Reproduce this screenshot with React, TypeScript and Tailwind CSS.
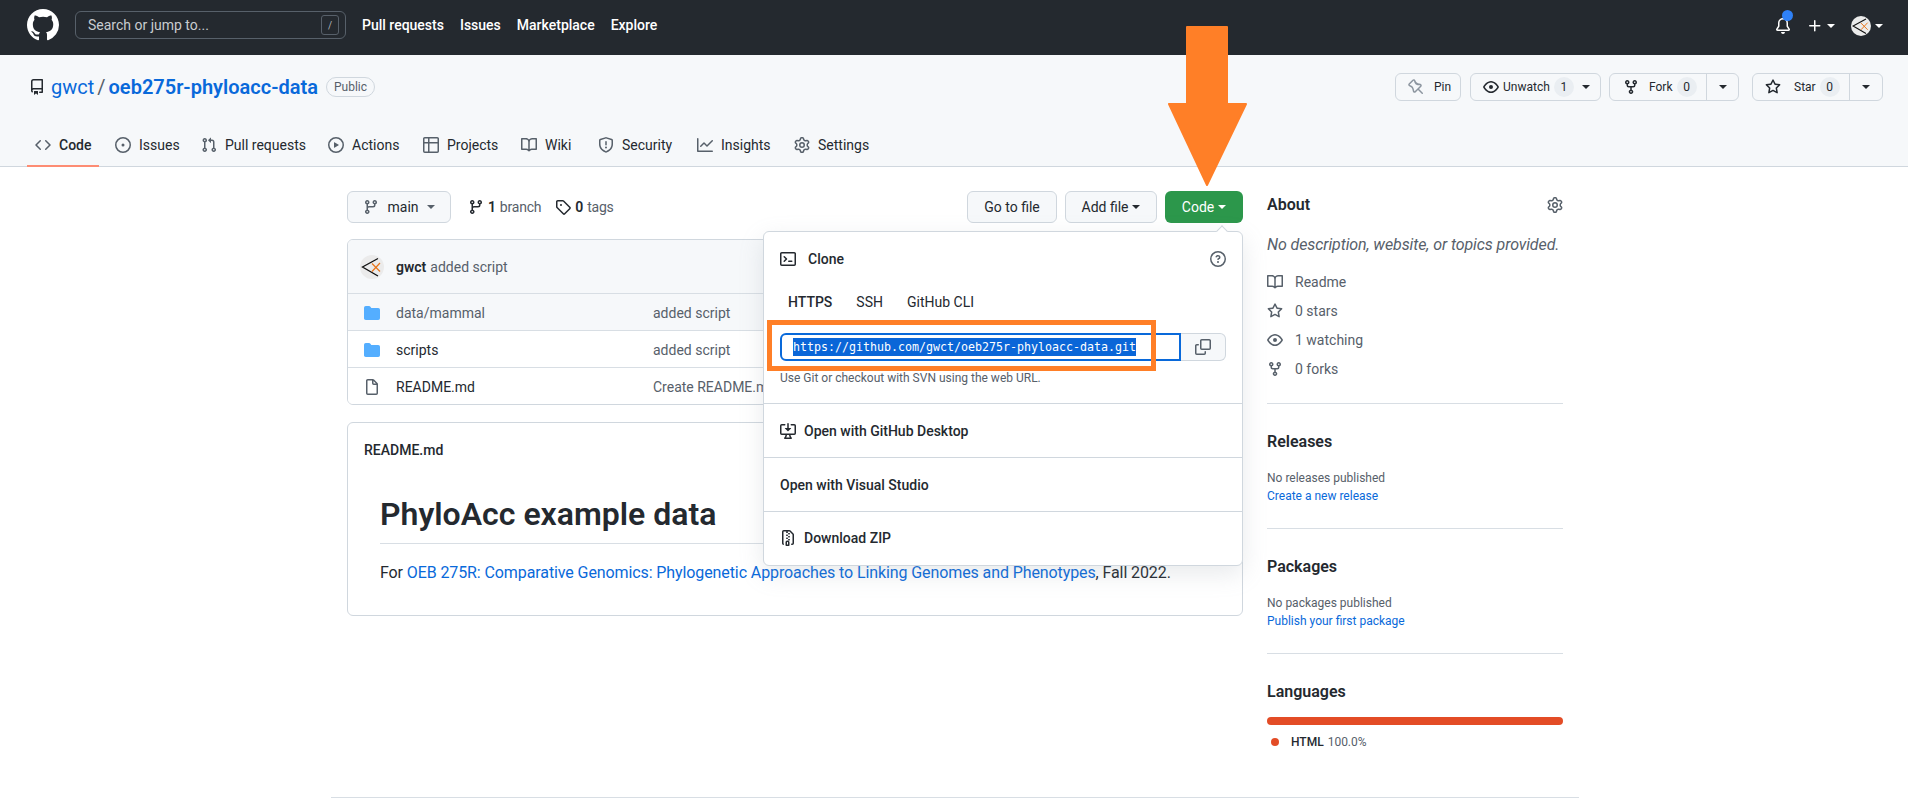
import React from 'react';

const icons: Record<string, string> = {
  github: 'M8 0C3.58 0 0 3.58 0 8c0 3.54 2.29 6.53 5.47 7.59.4.07.55-.17.55-.38 0-.19-.01-.82-.01-1.49-2.01.37-2.53-.49-2.69-.94-.09-.23-.48-.94-.82-1.13-.28-.15-.68-.52-.01-.53.63-.01 1.08.58 1.23.82.72 1.21 1.87.87 2.33.66.07-.52.28-.87.51-1.07-1.78-.2-3.64-.89-3.64-3.95 0-.87.31-1.59.82-2.15-.08-.2-.36-1.02.08-2.12 0 0 .67-.21 2.2.82.64-.18 1.32-.27 2-.27.68 0 1.36.09 2 .27 1.53-1.04 2.2-.82 2.2-.82.44 1.1.16 1.92.08 2.12.51.56.82 1.27.82 2.15 0 3.07-1.87 3.75-3.65 3.95.29.25.54.73.54 1.48 0 1.07-.01 1.93-.01 2.2 0 .21.15.46.55.38A8.013 8.013 0 0016 8c0-4.42-3.58-8-8-8z',
  repo: 'M2 2.5A2.5 2.5 0 014.5 0h8.75a.75.75 0 01.75.75v12.5a.75.75 0 01-.75.75h-2.5a.75.75 0 110-1.5h1.75v-2h-8a1 1 0 00-.714 1.7.75.75 0 01-1.072 1.05A2.495 2.495 0 012 11.5v-9zm10.5-1V9h-8c-.356 0-.694.074-1 .208V2.5a1 1 0 011-1h8zM5 12.25v3.25a.25.25 0 00.4.2l1.45-1.087a.25.25 0 01.3 0L8.6 15.7a.25.25 0 00.4-.2v-3.25a.25.25 0 00-.25-.25h-3.5a.25.25 0 00-.25.25z',
  code: 'M4.72 3.22a.75.75 0 011.06 1.06L2.06 8l3.72 3.72a.75.75 0 11-1.06 1.06L.47 8.53a.75.75 0 010-1.06l4.25-4.25zm6.56 0a.75.75 0 10-1.06 1.06L13.94 8l-3.72 3.72a.75.75 0 101.06 1.06l4.25-4.25a.75.75 0 000-1.06l-4.25-4.25z',
  issue: 'M8 9.5a1.5 1.5 0 100-3 1.5 1.5 0 000 3zM8 0a8 8 0 100 16A8 8 0 008 0zM1.5 8a6.5 6.5 0 1113 0 6.5 6.5 0 01-13 0z',
  pull: 'M7.177 3.073L9.573.677A.25.25 0 0110 .854v4.792a.25.25 0 01-.427.177L7.177 3.427a.25.25 0 010-.354zM3.75 2.5a.75.75 0 100 1.5.75.75 0 000-1.5zm-2.25.75a2.25 2.25 0 113 2.122v5.256a2.251 2.251 0 11-1.5 0V5.372A2.25 2.25 0 011.5 3.25zM11 2.5h-1V4h1a1 1 0 011 1v5.628a2.251 2.251 0 101.5 0V5A2.5 2.5 0 0011 2.5zm1 10.25a.75.75 0 111.5 0 .75.75 0 01-1.5 0zM3.75 12a.75.75 0 100 1.5.75.75 0 000-1.5z',
  play: 'M1.5 8a6.5 6.5 0 1113 0 6.5 6.5 0 01-13 0zM8 0a8 8 0 100 16A8 8 0 008 0zM6.379 5.227A.25.25 0 006 5.442v5.117a.25.25 0 00.379.214l4.264-2.559a.25.25 0 000-.428L6.379 5.227z',
  table: 'M0 1.75C0 .784.784 0 1.75 0h12.5C15.216 0 16 .784 16 1.75v12.5A1.75 1.75 0 0114.25 16H1.75A1.75 1.75 0 010 14.25V1.75zM1.5 6.5v7.75c0 .138.112.25.25.25H5v-8H1.5zM5 5H1.5V1.75a.25.25 0 01.25-.25H5V5zm1.5 1.5v8h7.75a.25.25 0 00.25-.25V6.5h-8zm8-1.5h-8V1.5h7.75a.25.25 0 01.25.25V5z',
  book: 'M0 1.75A.75.75 0 01.75 1h4.253c1.227 0 2.317.59 3 1.501A3.744 3.744 0 0111.006 1h4.245a.75.75 0 01.75.75v10.5a.75.75 0 01-.75.75h-4.507a2.25 2.25 0 00-1.591.659l-.622.621a.75.75 0 01-1.06 0l-.622-.621A2.25 2.25 0 005.258 13H.75a.75.75 0 01-.75-.75V1.75zm8.755 3a2.25 2.25 0 012.25-2.25H14.5v9h-3.757c-.71 0-1.4.201-1.992.572l.004-7.322zm-1.504 7.324l.004-5.073-.002-2.253A2.25 2.25 0 005.003 2.5H1.5v9h3.757a3.75 3.75 0 011.994.574z',
  shield: 'M7.467.133a1.75 1.75 0 011.066 0l5.25 1.68A1.75 1.75 0 0115 3.48V7c0 1.566-.32 3.182-1.303 4.682-.983 1.498-2.585 2.813-5.032 3.855a1.7 1.7 0 01-1.33 0c-2.447-1.042-4.049-2.357-5.032-3.855C1.32 10.182 1 8.566 1 7V3.48a1.75 1.75 0 011.217-1.667l5.25-1.68zm.61 1.429a.25.25 0 00-.153 0l-5.25 1.68a.25.25 0 00-.174.238V7c0 1.358.275 2.666 1.057 3.86.784 1.194 2.121 2.34 4.366 3.297a.2.2 0 00.154 0c2.245-.956 3.582-2.104 4.366-3.298C13.225 9.666 13.5 8.36 13.5 7V3.48a.25.25 0 00-.174-.237l-5.25-1.68zM9 10.5a1 1 0 11-2 0 1 1 0 012 0zm-.25-5.75a.75.75 0 10-1.5 0v3a.75.75 0 001.5 0v-3z',
  graph: 'M1.5 1.75a.75.75 0 00-1.5 0v12.5c0 .414.336.75.75.75h14.5a.75.75 0 000-1.5H1.5V1.75zm14.28 2.53a.75.75 0 00-1.06-1.06L10 7.94 7.53 5.47a.75.75 0 00-1.06 0L3.22 8.72a.75.75 0 001.06 1.06L7 7.06l2.47 2.47a.75.75 0 001.06 0l5.25-5.25z',
  gear: 'M7.429 1.525a6.593 6.593 0 011.142 0c.036.003.108.036.137.146l.289 1.105c.147.56.55.967.997 1.189.174.086.341.183.501.29.417.278.97.423 1.53.27l1.102-.303c.11-.03.175.016.195.046.219.31.41.641.573.989.014.031.022.11-.059.19l-.815.806c-.411.406-.562.957-.53 1.456a4.588 4.588 0 010 .582c-.032.499.119 1.05.53 1.456l.815.806c.08.08.073.159.059.19a6.494 6.494 0 01-.573.99c-.02.029-.086.074-.195.045l-1.103-.303c-.559-.153-1.112-.008-1.529.27-.16.107-.327.204-.5.29-.449.222-.851.628-.998 1.189l-.289 1.105c-.029.11-.101.143-.137.146a6.613 6.613 0 01-1.142 0c-.036-.003-.108-.037-.137-.146l-.289-1.105c-.147-.56-.55-.967-.997-1.189a4.502 4.502 0 01-.501-.29c-.417-.278-.97-.423-1.53-.27l-1.102.303c-.11.03-.175-.016-.195-.046a6.492 6.492 0 01-.573-.989c-.014-.031-.022-.11.059-.19l.815-.806c.411-.406.562-.957.53-1.456a4.587 4.587 0 010-.582c.032-.499-.119-1.05-.53-1.456l-.815-.806c-.08-.08-.073-.159-.059-.19a6.44 6.44 0 01.573-.99c.02-.029.086-.075.195-.045l1.103.303c.559.153 1.112.008 1.529-.27.16-.107.327-.204.5-.29.449-.222.851-.628.998-1.189l.289-1.105c.029-.11.101-.143.137-.146zM8 0c-.236 0-.47.01-.701.03-.743.065-1.29.615-1.458 1.261l-.29 1.106c-.017.066-.078.158-.211.224a5.994 5.994 0 00-.668.386c-.123.082-.233.09-.3.071L3.27 2.776c-.644-.177-1.392.02-1.82.63a7.977 7.977 0 00-.704 1.217c-.315.675-.111 1.422.363 1.891l.815.806c.05.048.098.147.088.294a6.084 6.084 0 000 .772c.01.147-.038.246-.088.294l-.815.806c-.474.469-.678 1.216-.363 1.891.2.428.436.835.704 1.218.428.609 1.176.806 1.82.63l1.103-.303c.066-.019.176-.011.299.071.213.143.436.272.668.386.133.066.194.158.212.224l.289 1.106c.169.646.715 1.196 1.458 1.26a8.094 8.094 0 001.402 0c.743-.064 1.29-.614 1.458-1.26l.29-1.106c.017-.066.078-.158.211-.224a5.98 5.98 0 00.668-.386c.123-.082.233-.09.3-.071l1.102.302c.644.177 1.392-.02 1.82-.63.268-.382.505-.789.704-1.217.315-.675.111-1.422-.364-1.891l-.814-.806c-.05-.048-.098-.147-.088-.294a6.1 6.1 0 000-.772c-.01-.147.039-.246.088-.294l.814-.806c.475-.469.679-1.216.364-1.891a7.992 7.992 0 00-.704-1.218c-.428-.609-1.176-.806-1.82-.63l-1.103.303c-.066.019-.176.011-.299-.071a5.991 5.991 0 00-.668-.386c-.133-.066-.194-.158-.212-.224L10.16 1.29C9.99.645 9.444.095 8.701.031A8.094 8.094 0 008 0zm1.5 8a1.5 1.5 0 11-3 0 1.5 1.5 0 013 0zM11 8a3 3 0 11-6 0 3 3 0 016 0z',
  bell: 'M8 16a2 2 0 001.985-1.75c.017-.137-.097-.25-.235-.25h-3.5c-.138 0-.252.113-.235.25A2 2 0 008 16zM8 1.5A3.5 3.5 0 004.5 5v2.947c0 .346-.102.683-.294.97l-1.703 2.556a.018.018 0 00-.003.01l.001.006c0 .002.002.004.004.006a.017.017 0 00.006.004l.007.001h10.964l.007-.001a.018.018 0 00.006-.004.017.017 0 00.004-.006l.001-.007a.017.017 0 00-.003-.01l-1.703-2.554a1.75 1.75 0 01-.294-.97V5A3.5 3.5 0 008 1.5zM3 5a5 5 0 0110 0v2.947c0 .05.015.098.042.139l1.703 2.555A1.518 1.518 0 0113.482 13H2.518a1.518 1.518 0 01-1.263-2.36l1.703-2.554A.25.25 0 003 7.947V5z',
  plus: 'M7.75 2a.75.75 0 01.75.75V7h4.25a.75.75 0 110 1.5H8.5v4.25a.75.75 0 11-1.5 0V8.5H2.75a.75.75 0 010-1.5H7V2.75A.75.75 0 017.75 2z',
  pin: 'M4.456.734a1.75 1.75 0 012.826.504l.613 1.327a3.081 3.081 0 002.084 1.707l2.454.584c1.332.317 1.8 1.972.832 2.94L11.06 10l3.72 3.72a.75.75 0 11-1.061 1.06L10 11.06l-2.204 2.205c-.968.968-2.623.5-2.94-.832l-.584-2.454a3.081 3.081 0 00-1.707-2.084l-1.327-.613a1.75 1.75 0 01-.504-2.826L4.456.734zM5.92 1.866a.25.25 0 00-.404-.072L1.794 5.516a.25.25 0 00.072.404l1.328.613A4.582 4.582 0 015.73 9.63l.584 2.454a.25.25 0 00.42.12l5.47-5.47a.25.25 0 00-.12-.42L9.63 6.33a4.581 4.581 0 01-3.098-2.537L5.92 1.866z',
  eye: 'M1.679 7.932c.412-.621 1.242-1.75 2.366-2.717C5.175 4.242 6.527 3.5 8 3.5c1.473 0 2.824.742 3.955 1.715 1.124.967 1.954 2.096 2.366 2.717a.119.119 0 010 .136c-.412.621-1.242 1.75-2.366 2.717C10.825 11.758 9.473 12.5 8 12.5c-1.473 0-2.824-.742-3.955-1.715C2.92 9.818 2.09 8.69 1.679 8.068a.119.119 0 010-.136zM8 2c-1.981 0-3.67.992-4.933 2.078C1.797 5.169.88 6.423.43 7.1a1.619 1.619 0 000 1.798c.45.678 1.367 1.932 2.637 3.024C4.329 13.008 6.019 14 8 14c1.981 0 3.67-.992 4.933-2.078 1.27-1.091 2.187-2.345 2.637-3.023a1.619 1.619 0 000-1.798c-.45-.678-1.367-1.932-2.637-3.023C11.671 2.992 9.981 2 8 2zm0 8a2 2 0 100-4 2 2 0 000 4z',
  fork: 'M5 3.25a.75.75 0 11-1.5 0 .75.75 0 011.5 0zm0 2.122a2.25 2.25 0 10-1.5 0v.878A2.25 2.25 0 005.75 8.5h1.5v2.128a2.251 2.251 0 101.5 0V8.5h1.5a2.25 2.25 0 002.25-2.25v-.878a2.25 2.25 0 10-1.5 0v.878a.75.75 0 01-.75.75h-4.5A.75.75 0 015 6.25v-.878zm3.75 7.378a.75.75 0 11-1.5 0 .75.75 0 011.5 0zm3-8.75a.75.75 0 100-1.5.75.75 0 000 1.5z',
  star: 'M8 .25a.75.75 0 01.673.418l1.882 3.815 4.21.612a.75.75 0 01.416 1.279l-3.046 2.97.719 4.192a.75.75 0 01-1.088.791L8 12.347l-3.766 1.98a.75.75 0 01-1.088-.79l.72-4.194L.818 6.374a.75.75 0 01.416-1.28l4.21-.611L7.327.668A.75.75 0 018 .25zm0 2.445L6.615 5.5a.75.75 0 01-.564.41l-3.097.45 2.24 2.184a.75.75 0 01.216.664l-.528 3.084 2.769-1.456a.75.75 0 01.698 0l2.77 1.456-.53-3.084a.75.75 0 01.216-.664l2.24-2.183-3.096-.45a.75.75 0 01-.564-.41L8 2.694v.001z',
  branch: 'M11.75 2.5a.75.75 0 100 1.5.75.75 0 000-1.5zm-2.25.75a2.25 2.25 0 113 2.122V6A2.5 2.5 0 0110 8.5H6a1 1 0 00-1 1v1.128a2.251 2.251 0 11-1.5 0V5.372a2.25 2.25 0 111.5 0v1.836A2.492 2.492 0 016 7h4a1 1 0 001-1v-.628A2.25 2.25 0 019.5 3.25zM4.25 12a.75.75 0 100 1.5.75.75 0 000-1.5zM3.5 3.25a.75.75 0 111.5 0 .75.75 0 01-1.5 0z',
  tag: 'M2.5 7.775V2.75a.25.25 0 01.25-.25h5.025a.25.25 0 01.177.073l6.25 6.25a.25.25 0 010 .354l-5.025 5.025a.25.25 0 01-.354 0l-6.25-6.25a.25.25 0 01-.073-.177zm-1.5 0V2.75C1 1.784 1.784 1 2.75 1h5.025c.464 0 .91.184 1.238.513l6.25 6.25a1.75 1.75 0 010 2.474l-5.026 5.026a1.75 1.75 0 01-2.474 0l-6.25-6.25A1.75 1.75 0 011 7.775zM6 5a1 1 0 100 2 1 1 0 000-2z',
  folder: 'M1.75 1A1.75 1.75 0 000 2.75v10.5C0 14.216.784 15 1.75 15h12.5A1.75 1.75 0 0016 13.25v-8.5A1.75 1.75 0 0014.25 3H7.5a.25.25 0 01-.2-.1l-.9-1.2C6.07 1.26 5.55 1 5 1H1.75z',
  file: 'M3.75 1.5a.25.25 0 00-.25.25v12.5c0 .138.112.25.25.25h8.5a.25.25 0 00.25-.25V6H9.75A1.75 1.75 0 018 4.25V1.5H3.75zm5.75.56v2.19c0 .138.112.25.25.25h2.19L9.5 2.06zM2 1.75C2 .784 2.784 0 3.75 0h5.086c.464 0 .909.184 1.237.513l3.414 3.414c.329.328.513.773.513 1.237v9.086A1.75 1.75 0 0112.25 16h-8.5A1.75 1.75 0 012 14.25V1.75z',
  terminal: 'M0 2.75C0 1.784.784 1 1.75 1h12.5c.966 0 1.75.784 1.75 1.75v10.5A1.75 1.75 0 0114.25 15H1.75A1.75 1.75 0 010 13.25V2.75zm1.75-.25a.25.25 0 00-.25.25v10.5c0 .138.112.25.25.25h12.5a.25.25 0 00.25-.25V2.75a.25.25 0 00-.25-.25H1.75zM7.25 8a.75.75 0 01-.22.53l-2.25 2.25a.75.75 0 11-1.06-1.06L5.44 8 3.72 6.28a.75.75 0 111.06-1.06l2.25 2.25c.141.14.22.331.22.53zm1.5 1.5a.75.75 0 000 1.5h3a.75.75 0 000-1.5h-3z',
  question: 'M8 1.5a6.5 6.5 0 100 13 6.5 6.5 0 000-13zM0 8a8 8 0 1116 0A8 8 0 010 8zm9 3a1 1 0 11-2 0 1 1 0 012 0zM6.92 6.085c.081-.16.19-.299.34-.398.145-.097.371-.187.74-.187.28 0 .553.087.738.225A.613.613 0 019 6.25c0 .177-.04.264-.077.318a.956.956 0 01-.277.245c-.076.051-.158.1-.258.161l-.007.004c-.093.056-.204.122-.313.195a2.416 2.416 0 00-.692.661.75.75 0 001.248.832.956.956 0 01.276-.245 6.3 6.3 0 01.26-.16l.006-.004c.093-.057.204-.123.313-.195.222-.149.487-.355.692-.662.214-.32.329-.702.329-1.15 0-.76-.36-1.348-.863-1.725A2.76 2.76 0 008 4c-.631 0-1.155.16-1.572.438-.413.276-.68.638-.849.977a.75.75 0 101.342.67z',
  copy: 'M0 6.75C0 5.784.784 5 1.75 5h1.5a.75.75 0 010 1.5h-1.5a.25.25 0 00-.25.25v7.5c0 .138.112.25.25.25h7.5a.25.25 0 00.25-.25v-1.5a.75.75 0 011.5 0v1.5A1.75 1.75 0 019.25 16h-7.5A1.75 1.75 0 010 14.25v-7.5zM5 1.75C5 .784 5.784 0 6.75 0h7.5C15.216 0 16 .784 16 1.75v7.5A1.75 1.75 0 0114.25 11h-7.5A1.75 1.75 0 015 9.25v-7.5zm1.75-.25a.25.25 0 00-.25.25v7.5c0 .138.112.25.25.25h7.5a.25.25 0 00.25-.25v-7.5a.25.25 0 00-.25-.25h-7.5z',
  desktop: 'M4.927 5.427l2.896 2.896a.25.25 0 00.354 0l2.896-2.896A.25.25 0 0010.896 5H8.75V.75a.75.75 0 10-1.5 0V5H5.104a.25.25 0 00-.177.427zM1.573 2.573a.25.25 0 00-.073.177v7.5a.25.25 0 00.25.25h12.5a.25.25 0 00.25-.25v-7.5a.25.25 0 00-.25-.25h-3a.75.75 0 110-1.5h3A1.75 1.75 0 0116 2.75v7.5A1.75 1.75 0 0114.25 12h-3.727c.099 1.041.52 1.872 1.292 2.757A.75.75 0 0111.25 16h-6.5a.75.75 0 01-.565-1.243c.772-.885 1.192-1.716 1.292-2.757H1.75A1.75 1.75 0 010 10.25v-7.5A1.75 1.75 0 011.75 1h3a.75.75 0 010 1.5h-3a.25.25 0 00-.177.073zM6.982 12a5.72 5.72 0 01-.765 2.5h3.566a5.72 5.72 0 01-.765-2.5H6.982z',
  zip: 'M3.5 1.75a.25.25 0 01.25-.25h3a.75.75 0 000 1.5h.5a.75.75 0 000-1.5h2.086a.25.25 0 01.177.073l2.914 2.914a.25.25 0 01.073.177v8.586a.25.25 0 01-.25.25h-.5a.75.75 0 000 1.5h.5A1.75 1.75 0 0014 13.25V4.664c0-.464-.184-.909-.513-1.237L10.573.513A1.75 1.75 0 009.336 0H3.75A1.75 1.75 0 002 1.75v11.5c0 .649.353 1.214.874 1.515a.75.75 0 10.752-1.298.25.25 0 01-.126-.217V1.75zM8.75 3a.75.75 0 000 1.5h.5a.75.75 0 000-1.5h-.5zM6 5.25a.75.75 0 01.75-.75h.5a.75.75 0 010 1.5h-.5A.75.75 0 016 5.25zm2 1.5A.75.75 0 018.75 6h.5a.75.75 0 010 1.5h-.5A.75.75 0 018 6.75zm-1.25.75a.75.75 0 000 1.5h.5a.75.75 0 000-1.5h-.5zM8 9.75A.75.75 0 018.75 9h.5a.75.75 0 010 1.5h-.5A.75.75 0 018 9.75zm-.75.75a1.75 1.75 0 00-1.75 1.75v3c0 .414.336.75.75.75h2.5a.75.75 0 00.75-.75v-3a1.75 1.75 0 00-1.75-1.75h-.5zM7 12.25a.25.25 0 01.25-.25h.5a.25.25 0 01.25.25v2.25H7v-2.25z',
};

const Icon = ({ name, className = 'w-4 h-4 text-[#57606a]' }: { name: string; className?: string }) => (
  <svg viewBox="0 0 16 16" fill="currentColor" className={`shrink-0 ${className}`}>
    <path fillRule="evenodd" d={icons[name]} />
  </svg>
);

const Caret = ({ className = 'border-t-[#57606a]' }: { className?: string }) => (
  <span className={`inline-block w-0 h-0 border-x-4 border-t-4 border-x-transparent ${className}`} />
);

const Avatar = ({ className }: { className: string }) => (
  <svg viewBox="0 0 24 24" className={`shrink-0 rounded-full ${className}`}>
    <rect width="24" height="24" fill="#ebebeb" />
    <path d="M18 3.5 L2.5 12 L18 21" fill="none" stroke="#111" strokeWidth="1.3" />
    <path d="M12 8.5 L20 16.5 M20 8 L12 16.5" fill="none" stroke="#e8751a" strokeWidth="1.2" />
  </svg>
);

const tabs = [
  { icon: 'code', label: 'Code', width: 'w-[72px]', active: true },
  { icon: 'issue', label: 'Issues', width: 'w-[78px]' },
  { icon: 'pull', label: 'Pull requests', width: 'w-[119px]' },
  { icon: 'play', label: 'Actions', width: 'w-[87px]' },
  { icon: 'table', label: 'Projects', width: 'w-[90px]' },
  { icon: 'book', label: 'Wiki', width: 'w-[69px]' },
  { icon: 'shield', label: 'Security', width: 'w-[91px]' },
  { icon: 'graph', label: 'Insights', width: 'w-[89px]' },
  { icon: 'gear', label: 'Settings', width: 'w-[91px]' },
];

const files = [
  { icon: 'folder', name: 'data/mammal', message: 'added script', bg: 'bg-[#f6f8fa]', color: 'text-[#57606a]' },
  { icon: 'folder', name: 'scripts', message: 'added script', bg: 'bg-white', color: 'text-[#24292f]' },
  { icon: 'file', name: 'README.md', message: 'Create README.md', bg: 'bg-white', color: 'text-[#24292f]' },
];

const btn = 'flex items-center justify-center h-8 rounded-md border border-[#d0d7de] bg-[#f6f8fa] text-sm text-[#24292f]';
const smallBtn = 'flex items-center h-7 rounded-md border border-[#d0d7de] bg-[#f6f8fa] text-xs text-[#24292f]';
const counter = 'flex items-center justify-center w-5 h-5 rounded-full bg-[#eaeef2] text-xs';
const sideHeading = 'text-base font-semibold text-[#24292f] leading-6';
const aboutRows = [
  { icon: 'book', text: 'Readme' },
  { icon: 'star', text: '0 stars' },
  { icon: 'eye', text: '1 watching' },
  { icon: 'fork', text: '0 forks' },
];

export default function App() {
  return (
    <div className="relative h-[811px] overflow-hidden bg-white font-['Roboto',sans-serif] text-[#24292f]">
      <header className="flex items-center h-[55px] pb-[5px] bg-[#24292f] text-white">
        <Icon name="github" className="w-8 h-8 ml-[27px] text-white" />
        <div className="flex items-center justify-between w-[271px] h-7 ml-4 pl-3 pr-[6px] rounded-md border border-[#57606a]">
          <span className="text-sm text-[#c9ccd0]">Search or jump to...</span>
          <span className="flex items-center justify-center w-[18px] h-5 rounded-[3px] border border-[#57606a] text-[10px] text-[#b0b4b8]">/</span>
        </div>
        <nav className="flex items-center gap-4 ml-4 text-sm font-medium whitespace-nowrap">
          <span>Pull requests</span>
          <span>Issues</span>
          <span>Marketplace</span>
          <span>Explore</span>
        </nav>
        <div className="flex items-center ml-auto mr-[25px] mt-[2px]">
          <div className="relative">
            <Icon name="bell" className="w-4 h-4 text-white" />
            <span className="absolute -top-[8px] left-[7px] w-[11px] h-[11px] rounded-full bg-[#2f81f7]" />
          </div>
          <Icon name="plus" className="w-4 h-4 ml-4 text-white" />
          <Caret className="ml-1 border-t-white" />
          <Avatar className="w-5 h-5 ml-4" />
          <Caret className="ml-1 border-t-white" />
        </div>
      </header>

      <section className="h-[112px] bg-[#f6f8fa] border-b border-[#d0d7de]">
        <div className="flex items-start justify-between h-[71px] pl-[29px] pr-[25px] pt-[18px]">
          <div className="flex items-center h-[28px]">
            <Icon name="repo" className="w-4 h-4 mr-[6px]" />
            <span className="text-[20px] text-[#0969da]">gwct</span>
            <span className="text-[20px] text-[#57606a] mx-[3px]">/</span>
            <span className="text-[20px] font-semibold text-[#0969da]">oeb275r-phyloacc-data</span>
            <span className="flex items-center h-5 ml-2 px-[7px] rounded-full border border-[#d0d7de] text-xs text-[#57606a]">Public</span>
          </div>
          <div className="flex items-center">
            <div className={`${smallBtn} w-[66px] pl-[12px] gap-[10px] text-[#8c959f]`}>
              <Icon name="pin" className="w-4 h-4 text-[#8c959f]" />
              Pin
            </div>
            <div className={`${smallBtn} w-[131px] ml-[9px] pl-[12px]`}>
              <Icon name="eye" className="w-4 h-4 mr-1" />
              Unwatch
              <span className={`${counter} ml-1`}>1</span>
              <Caret className="ml-[8px]" />
            </div>
            <div className={`${smallBtn} w-[130px] ml-[8px]`}>
              <div className="flex items-center w-[97px] h-full pl-[13px] border-r border-[#d0d7de]">
                <Icon name="fork" className="w-4 h-4 mr-[10px]" />
                Fork
                <span className={`${counter} ml-1`}>0</span>
              </div>
              <Caret className="ml-[12px]" />
            </div>
            <div className={`${smallBtn} w-[131px] ml-[13px]`}>
              <div className="flex items-center w-[97px] h-full pl-[12px] border-r border-[#d0d7de]">
                <Icon name="star" className="w-4 h-4 mr-[13px]" />
                Star
                <span className={`${counter} ml-1`}>0</span>
              </div>
              <Caret className="ml-[12px]" />
            </div>
          </div>
        </div>
        <nav className="flex gap-2 h-[41px] ml-[27px]">
          {tabs.map(tab => (
            <div key={tab.label} className={`flex items-center pl-2 pb-[1px] gap-2 h-[41px] text-sm border-b-2 ${tab.width} ${tab.active ? 'border-[#fd8c73] font-medium' : 'border-transparent'}`}>
              <Icon name={tab.icon} />
              <span>{tab.label}</span>
            </div>
          ))}
        </nav>
      </section>

      <main className="flex gap-6 ml-[347px] w-[1216px] pt-6">
        <div className="w-[896px]">
          <div className="relative flex items-center">
            <div className={`${btn} w-[104px] gap-2`}>
              <Icon name="branch" />
              main
              <Caret />
            </div>
            <div className="flex items-center ml-[17px] text-sm tracking-[-0.2px] text-[#57606a]">
              <Icon name="branch" className="w-4 h-4 text-[#24292f] mr-1" />
              <b className="font-semibold text-[#24292f] mr-1">1</b>branch
            </div>
            <div className="flex items-center ml-[14px] text-sm tracking-[-0.2px] text-[#57606a]">
              <Icon name="tag" className="w-4 h-4 text-[#24292f] mr-1" />
              <b className="font-semibold text-[#24292f] mr-1">0</b>tags
            </div>
            <div className={`${btn} w-[90px] ml-auto`}>Go to file</div>
            <div className={`${btn} w-[92px] ml-2 gap-1`}>
              Add file
              <Caret className="border-t-[#24292f]" />
            </div>
            <div className="flex items-center justify-center gap-1 w-[78px] h-8 ml-2 rounded-md bg-[#2c974b] text-sm text-white">
              Code
              <Caret className="border-t-white" />
            </div>

            <div className="absolute z-10 top-10 right-0 w-[480px] h-[335px] rounded-md border border-[#d0d7de] bg-white shadow-[0_8px_24px_rgba(140,149,159,0.2)]">
              <span className="absolute -top-[5px] right-[16px] w-2 h-2 rotate-45 bg-white border-l border-t border-[#d0d7de]" />
              <div className="h-[172px] border-b border-[#d0d7de] px-4">
                <div className="flex items-center justify-between h-[54px]">
                  <div className="flex items-center gap-3 text-sm font-medium">
                    <Icon name="terminal" className="w-4 h-4 text-[#24292f]" />
                    Clone
                  </div>
                  <Icon name="question" />
                </div>
                <div className="flex items-center gap-6 h-[32px] pl-2 text-sm">
                  <span className="font-medium">HTTPS</span>
                  <span>SSH</span>
                  <span>GitHub CLI</span>
                </div>
                <div className="flex mt-[15px] h-7">
                  <div className="flex items-center w-[401px] h-7 pl-[11px] rounded-l-md border-2 border-[#0969da] overflow-hidden">
                    <span className="bg-[#0a66d8] text-white font-['DejaVu_Sans_Mono',monospace] text-[11.63px] leading-[18px] whitespace-nowrap">https://github.com/gwct/oeb275r-phyloacc-data.git</span>
                  </div>
                  <div className="flex items-center justify-center w-[45px] rounded-r-md border border-l-0 border-[#d0d7de] bg-[#f6f8fa]">
                    <Icon name="copy" />
                  </div>
                </div>
                <p className="mt-[8px] text-xs text-[#57606a] leading-[18px]">Use Git or checkout with SVN using the web URL.</p>
              </div>
              <div className="flex items-center gap-2 h-[54px] px-4 border-b border-[#d0d7de] text-sm font-medium">
                <Icon name="desktop" className="w-4 h-4 text-[#24292f]" />
                Open with GitHub Desktop
              </div>
              <div className="flex items-center h-[54px] px-4 border-b border-[#d0d7de] text-sm font-medium">Open with Visual Studio</div>
              <div className="flex items-center gap-2 h-[52px] px-4 text-sm font-medium">
                <Icon name="zip" className="w-4 h-4 text-[#24292f]" />
                Download ZIP
              </div>
            </div>
            <div className="absolute z-20 top-[129px] left-[420px] w-[389px] h-[51px] border-[5px] border-[#ff7f27]" />
          </div>

          <div className="mt-4 rounded-md border border-[#d0d7de] overflow-hidden">
            <div className="flex items-center h-[53px] pl-3 bg-[#f6f8fa] text-sm">
              <Avatar className="w-6 h-6 mr-3" />
              <b className="font-semibold mr-1">gwct</b>
              <span className="text-[#57606a]">added script</span>
            </div>
            {files.map(file => (
              <div key={file.name} className={`flex items-center h-[37px] pl-4 pt-[1px] border-t border-[#d8dee4] text-sm ${file.bg}`}>
                <Icon name={file.icon} className={`w-4 h-4 mr-4 ${file.icon === 'folder' ? 'text-[#54aeff]' : 'text-[#57606a]'}`} />
                <span className={`w-[257px] ${file.color}`}>{file.name}</span>
                <span className="text-[#57606a]">{file.message}</span>
              </div>
            ))}
          </div>

          <article className="mt-[17px] h-[194px] rounded-md border border-[#d0d7de] pt-[17px]">
            <div className="ml-4 text-sm font-medium leading-5">README.md</div>
            <h1 className="mx-8 mt-[34px] pb-[9px] text-[32px] leading-[40px] font-semibold border-b border-[#d8dee4]">PhyloAcc example data</h1>
            <p className="mx-8 mt-[17px] text-base leading-6 tracking-[-0.1px] whitespace-nowrap">
              For <span className="text-[#0969da]">OEB 275R: Comparative Genomics: Phylogenetic Approaches to Linking Genomes and Phenotypes</span>, Fall 2022.
            </p>
          </article>
        </div>

        <aside className="w-[296px]">
          <div className="flex items-center justify-between mt-[2px]">
            <h2 className={sideHeading}>About</h2>
            <Icon name="gear" />
          </div>
          <p className="mt-[16px] text-base italic text-[#57606a] leading-6 tracking-[-0.1px] whitespace-nowrap">No description, website, or topics provided.</p>
          <ul className="mt-[10px] pb-[20px] border-b border-[#d8dee4]">
            {aboutRows.map(row => (
              <li key={row.text} className="flex items-center h-[29px] gap-3 text-sm text-[#57606a]">
                <Icon name={row.icon} />
                {row.text}
              </li>
            ))}
          </ul>
          <h2 className={`${sideHeading} mt-[26px]`}>Releases</h2>
          <div className="mt-[15px] text-xs leading-[18px] text-[#57606a]">No releases published</div>
          <div className="text-xs leading-[18px] text-[#0969da]">Create a new release</div>
          <div className="mt-[23px] border-b border-[#d8dee4]" />
          <h2 className={`${sideHeading} mt-[26px]`}>Packages</h2>
          <div className="mt-[15px] text-xs leading-[18px] text-[#57606a]">No packages published</div>
          <div className="text-xs leading-[18px] text-[#0969da]">Publish your first package</div>
          <div className="mt-[23px] border-b border-[#d8dee4]" />
          <h2 className={`${sideHeading} mt-[26px]`}>Languages</h2>
          <div className="mt-[13px] h-2 rounded-md bg-[#e34c26]" />
          <div className="flex items-center h-[18px] mt-2 ml-1 text-xs">
            <span className="w-2 h-2 rounded-full bg-[#e34c26]" />
            <span className="ml-3 font-medium">HTML</span>
            <span className="ml-1 text-[#57606a]">100.0%</span>
          </div>
        </aside>
      </main>

      <div className="absolute top-[797px] left-[331px] w-[1248px] border-t border-[#d8dee4]" />

      <svg viewBox="0 0 80 160" className="absolute z-30 top-[26px] left-[1168px] w-[80px] h-[160px]">
        <path d="M19 1 H59 V78 H78 L39 159 L1 78 H19 Z" fill="#ff7f27" stroke="#ff7f27" strokeWidth="2" strokeLinejoin="round" />
      </svg>
    </div>
  );
}
